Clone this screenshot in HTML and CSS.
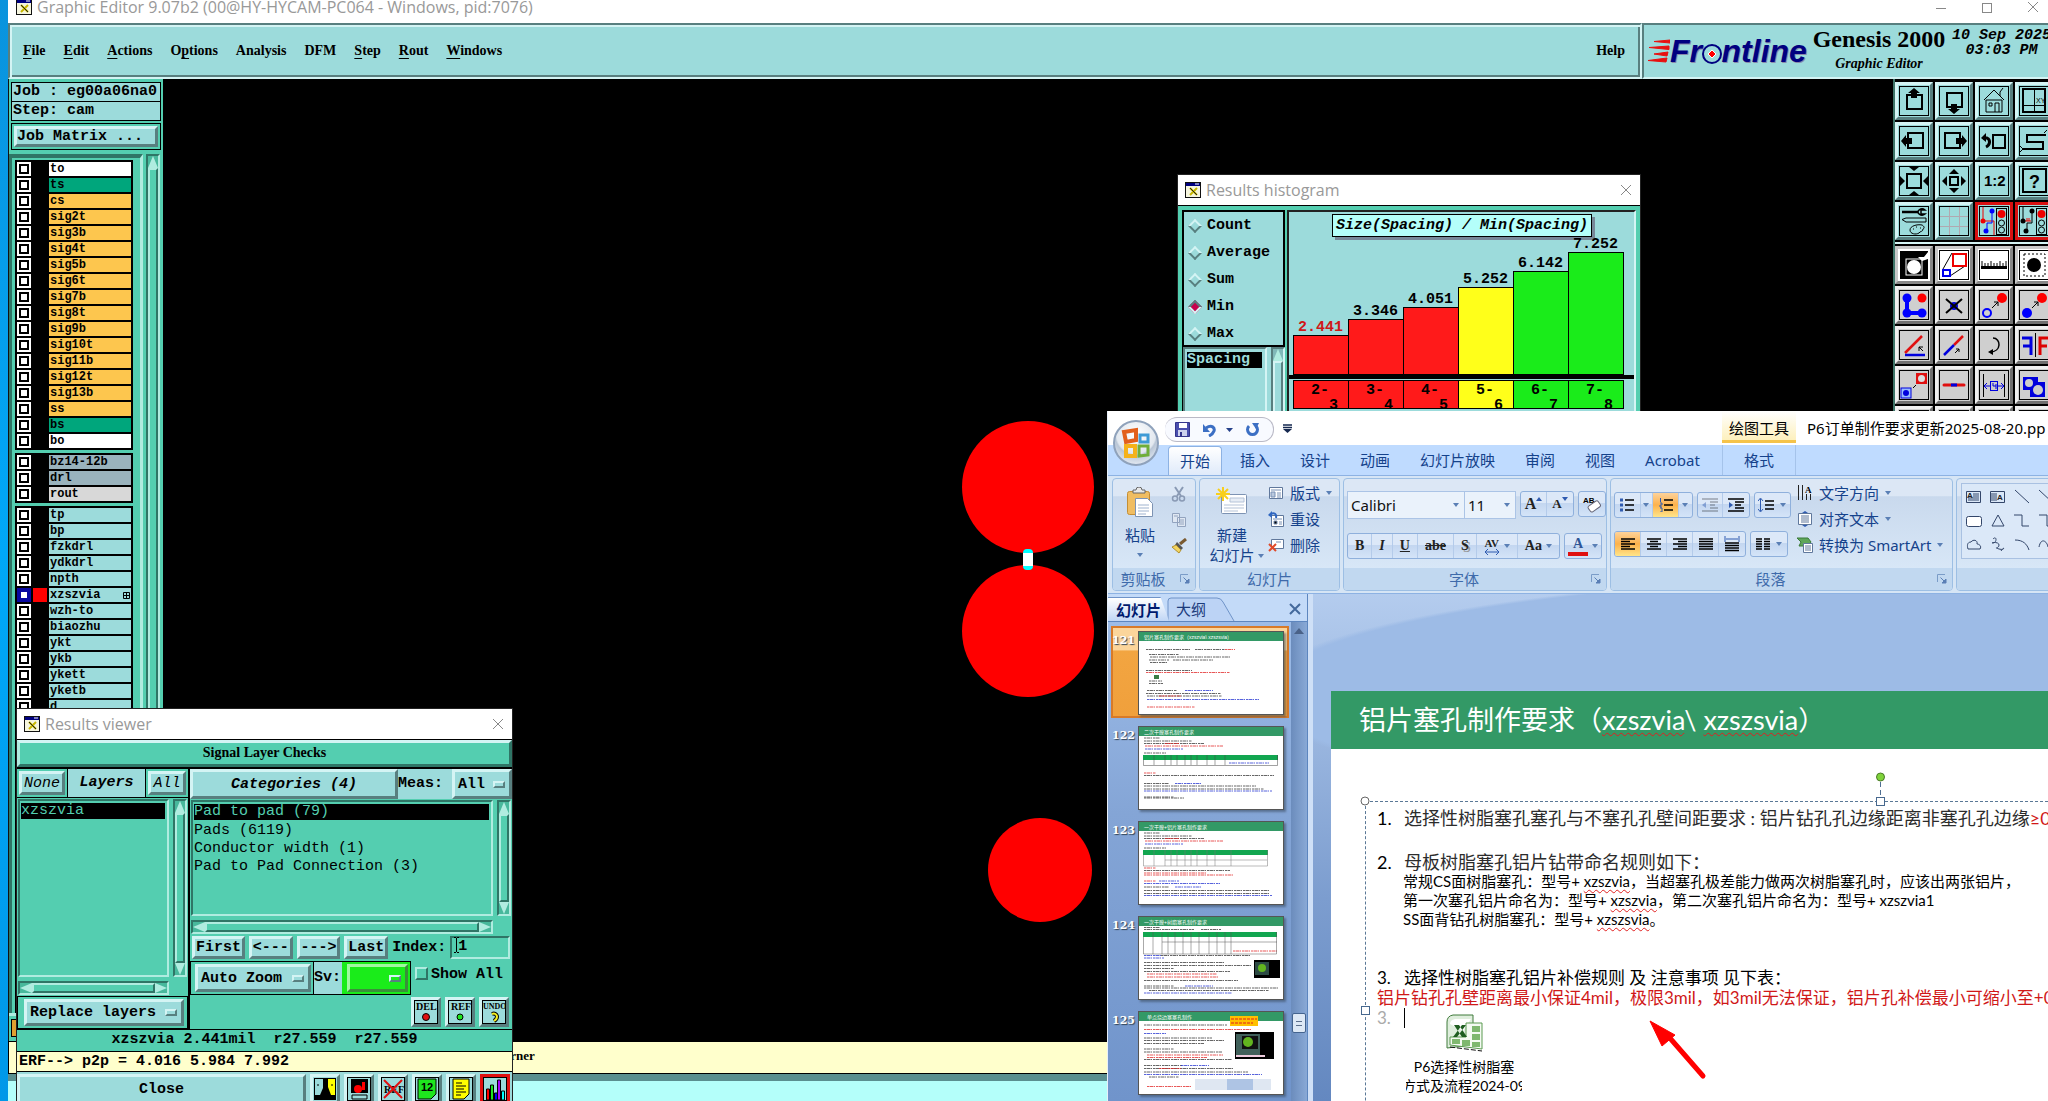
FILE: index.html
```html
<!DOCTYPE html>
<html lang="zh-CN">
<head>
<meta charset="utf-8">
<title>Graphic Editor</title>
<link rel="stylesheet" href="styles.css">
</head>
<body>
<svg class="defs" width="0" height="0" aria-hidden="true">
  <symbol id="appicon" viewBox="0 0 16 16"><rect x=".5" y=".5" width="15" height="15" fill="#f6f6e0" stroke="#111"/><rect x="1" y="1" width="14" height="3" fill="#000080"/><path d="M10 2h4" stroke="#fff"/><path d="M5 6l7 7M12 6l-7 7" stroke="#c8b800" stroke-width="2"/><path d="M5 6l7 7" stroke="#222"/></symbol>
  <symbol id="close" viewBox="0 0 12 12"><path d="M1 1l10 10M11 1L1 11" stroke="#888" stroke-width="1" fill="none"/></symbol>
  <symbol id="dd" viewBox="0 0 6 4"><path d="M0 0h6L3 4z" fill="#5a7fb5"/></symbol>
  <symbol id="launch" viewBox="0 0 10 10"><path d="M.5 8V.5H8" stroke="#7a9cc8" fill="none"/><path d="M3.500 3.500l4 4M9 5v4H5z" stroke="#5a7fb5" fill="#5a7fb5"/></symbol>
  <symbol id="lines" viewBox="0 0 14 12"><path d="M0 1h14M0 3.500h9M0 6h14M0 8.500h9M0 11h14" stroke="#000" stroke-width="1.400"/></symbol>
</svg>

<main class="editor">
  <header class="titlebar main-title">
    <svg class="appicon"><use href="#appicon"/></svg>
    <h1>Graphic Editor 9.07b2 (00@HY-HYCAM-PC064 - Windows, pid:7076)</h1>
    <div class="win-btns">
      <button aria-label="Minimize"><svg width="12" height="12"><path d="M1 7.500h10" stroke="#888"/></svg></button>
      <button aria-label="Maximize"><svg width="12" height="12"><rect x="1.500" y="2.500" width="9" height="9" fill="none" stroke="#888"/></svg></button>
      <button aria-label="Close"><svg width="12" height="12"><use href="#close"/></svg></button>
    </div>
  </header>

  <div class="menurow">
    <nav class="menubar">
      <button><u>F</u>ile</button><button><u>E</u>dit</button><button><u>A</u>ctions</button><button>O<u>p</u>tions</button><button>Analysis</button><button>DFM</button><button><u>S</u>tep</button><button><u>R</u>out</button><button><u>W</u>indows</button><button class="help">Help</button>
    </nav>
    <div class="brand">
      <div class="logo">
        <svg class="speed" width="22" height="26" viewBox="0 0 22 26"><path d="M22 2L6 3.500 22 5zM21 8L1 9.500 21 11.500zM20 14L6 16 19 18zM19 20L0 22.500 18 24z" fill="#e81010" stroke="#e81010"/></svg>
        <span class="logotext">Fr<span class="logo-o">o<svg width="22" height="22" viewBox="0 0 22 22"><circle cx="11" cy="11" r="9" fill="#9cdbdb" stroke="#000080" stroke-width="2"/><path d="M11 7l4 4-4 4-4-4z" fill="#f00" stroke="#fff"/></svg></span>ntline</span>
      </div>
      <div class="product"><strong>Genesis 2000</strong><em>Graphic Editor</em></div>
      <div class="clock"><span>10 Sep 2025</span><span>03:03 PM</span></div>
    </div>
  </div>

  <div class="work">
    <aside class="side">
      <div class="jobinfo">Job : eg00a06na0</div>
      <div class="jobinfo">Step: cam</div>
      <div class="matrixbox"><button class="bev">Job Matrix ...</button></div>
      <div class="layerpane">
        <div class="layerlist">
          <div class="sect">
            <label class="ly w"><input type="checkbox"><i></i><span>to</span></label>
            <label class="ly g"><input type="checkbox"><i></i><span>ts</span></label>
            <label class="ly o"><input type="checkbox"><i></i><span>cs</span></label>
            <label class="ly o"><input type="checkbox"><i></i><span>sig2t</span></label>
            <label class="ly o"><input type="checkbox"><i></i><span>sig3b</span></label>
            <label class="ly o"><input type="checkbox"><i></i><span>sig4t</span></label>
            <label class="ly o"><input type="checkbox"><i></i><span>sig5b</span></label>
            <label class="ly o"><input type="checkbox"><i></i><span>sig6t</span></label>
            <label class="ly o"><input type="checkbox"><i></i><span>sig7b</span></label>
            <label class="ly o"><input type="checkbox"><i></i><span>sig8t</span></label>
            <label class="ly o"><input type="checkbox"><i></i><span>sig9b</span></label>
            <label class="ly o"><input type="checkbox"><i></i><span>sig10t</span></label>
            <label class="ly o"><input type="checkbox"><i></i><span>sig11b</span></label>
            <label class="ly o"><input type="checkbox"><i></i><span>sig12t</span></label>
            <label class="ly o"><input type="checkbox"><i></i><span>sig13b</span></label>
            <label class="ly o"><input type="checkbox"><i></i><span>ss</span></label>
            <label class="ly g"><input type="checkbox"><i></i><span>bs</span></label>
            <label class="ly w"><input type="checkbox"><i></i><span>bo</span></label>
          </div>
          <div class="sect">
            <label class="ly s"><input type="checkbox"><i></i><span>bz14-12b</span></label>
            <label class="ly s"><input type="checkbox"><i></i><span>drl</span></label>
            <label class="ly r"><input type="checkbox"><i></i><span>rout</span></label>
          </div>
          <div class="sect grow">
            <label class="ly"><input type="checkbox"><i></i><span>tp</span></label>
            <label class="ly"><input type="checkbox"><i></i><span>bp</span></label>
            <label class="ly"><input type="checkbox"><i></i><span>fzkdrl</span></label>
            <label class="ly"><input type="checkbox"><i></i><span>ydkdrl</span></label>
            <label class="ly"><input type="checkbox"><i></i><span>npth</span></label>
            <label class="ly"><input type="checkbox" checked><i class="red"></i><span>xzszvia<svg width="7" height="7"><path d="M.5.500h6v6h-6zM3.500 0v7M0 3.500h7" fill="none" stroke="#000"/></svg></span></label>
            <label class="ly"><input type="checkbox"><i></i><span>wzh-to</span></label>
            <label class="ly"><input type="checkbox"><i></i><span>biaozhu</span></label>
            <label class="ly"><input type="checkbox"><i></i><span>ykt</span></label>
            <label class="ly"><input type="checkbox"><i></i><span>ykb</span></label>
            <label class="ly"><input type="checkbox"><i></i><span>ykett</span></label>
            <label class="ly"><input type="checkbox"><i></i><span>yketb</span></label>
            <label class="ly"><input type="checkbox"><i></i><span>d</span></label>
          </div>
        </div>
        <div class="vs"><b class="up"></b><b class="bar"></b></div>
      </div>
      <div class="sidefoot"><i></i></div>
    </aside>

    <section class="canvas" aria-label="Board view">
      <svg width="100%" height="100%">
        <g fill="#f00"><circle cx="865" cy="408" r="66"/><circle cx="865" cy="552" r="66"/><circle cx="877" cy="791" r="52"/></g>
        <rect x="860" y="470" width="10" height="21" rx="4" fill="#0ff"/><rect x="860" y="474" width="10" height="13" fill="#fff"/>
      </svg>
    </section>

    <aside class="tools">
      <div class="toolgrid">
        <button aria-label="Pan up"><svg viewBox="0 0 32 32"><rect class="fr" x="1.500" y="1.500" width="29" height="29"/><rect x="9" y="10" width="15" height="14" class="k2"/><path d="M16 3l6 5h-3v5h-6V8h-3z"/></svg></button>
        <button aria-label="Pan down"><svg viewBox="0 0 32 32"><rect class="fr" x="1.500" y="1.500" width="29" height="29"/><rect x="9" y="8" width="15" height="14" class="k2"/><path d="M16 29l6-5h-3v-5h-6v5h-3z"/></svg></button>
        <button aria-label="Home"><svg viewBox="0 0 32 32"><rect class="fr" x="1.500" y="1.500" width="29" height="29"/><path class="k1" d="M6 15l10-10 10 10M22 11V7l3-4M8 15v12h16V15M11 18h3v3h-3zM17 27v-9h4v9M8 15h16"/></svg></button>
        <button aria-label="Coordinates"><svg viewBox="0 0 32 32"><rect class="fr" x="1.500" y="1.500" width="29" height="29"/><rect class="k2" x="5" y="4" width="22" height="23"/><path class="k1" d="M16.500 4v23M5 20.500h22"/><text x="18" y="18" font-size="7">XY</text></svg></button>
        <button aria-label="Pan left"><svg viewBox="0 0 32 32"><rect class="fr" x="1.500" y="1.500" width="29" height="29"/><rect x="10" y="8" width="15" height="15" class="k2"/><path d="M3 16l5-6v3h6v6H8v3z"/></svg></button>
        <button aria-label="Pan right"><svg viewBox="0 0 32 32"><rect class="fr" x="1.500" y="1.500" width="29" height="29"/><rect x="7" y="8" width="15" height="15" class="k2"/><path d="M29 16l-5-6v3h-6v6h6v3z"/></svg></button>
        <button aria-label="Previous view"><svg viewBox="0 0 32 32"><rect class="fr" x="1.500" y="1.500" width="29" height="29"/><rect x="15" y="10" width="12" height="13" class="k2"/><path d="M5 13h4c4 2 3 7-1 9" fill="none" stroke="#000" stroke-width="3"/><path d="M3 13l5-5v9z"/></svg></button>
        <button aria-label="Serpentine"><svg viewBox="0 0 32 32"><rect class="fr" x="1.500" y="1.500" width="29" height="29"/><path class="k2" d="M28 10H9v7h16v7H5"/><path class="k1" d="M26 8l3-3M2 27l3-3M2 21l3 3"/></svg></button>
        <button aria-label="Zoom in"><svg viewBox="0 0 32 32"><rect class="fr" x="1.500" y="1.500" width="29" height="29"/><rect x="9" y="9" width="14" height="14" class="k2"/><path d="M11 2h10l-5 4zM11 30h10l-5-4zM2 11v10l5-5zM30 11v10l-5-5z"/></svg></button>
        <button aria-label="Zoom out"><svg viewBox="0 0 32 32"><rect class="fr" x="1.500" y="1.500" width="29" height="29"/><rect x="12" y="12" width="8" height="8" class="k2"/><path d="M11 9h10l-5-5zM11 23h10l-5 5zM9 11v10l-5-5zM23 11v10l5-5z"/></svg></button>
        <button aria-label="Scale"><svg viewBox="0 0 32 32"><rect class="fr" x="1.500" y="1.500" width="29" height="29"/><text x="6" y="21" font-size="15" font-weight="bold">1:2</text></svg></button>
        <button aria-label="Query"><svg viewBox="0 0 32 32"><rect class="fr" x="1.500" y="1.500" width="29" height="29"/><rect class="k2" x="5" y="4" width="23" height="23"/><text x="11" y="23" font-size="18" font-weight="bold">?</text></svg></button>
        <button aria-label="Setup"><svg viewBox="0 0 32 32"><rect class="fr" x="1.500" y="1.500" width="29" height="29"/><path d="M4 7h16" stroke="#000" stroke-width="2.500"/><path d="M27 5a4 3 0 1 0 0 4h-4V5z" fill="none" stroke="#000" stroke-width="1.500"/><path class="k1" d="M4 14.500l4-1.500h20v4H8z"/><path class="k1" d="M24 20c-5-1-12 1-12 5s6 5 9 3c1-2 4-1 4-4 2-1 1-3-1-4zM15 24h1M18 22h1M22 23h1"/></svg></button>
        <button aria-label="Grid"><svg viewBox="0 0 32 32"><rect class="fr" x="1.500" y="1.500" width="29" height="29"/><path d="M11.500 2v28M21.500 2v28M2 11.500h28M2 21.500h28" stroke="#b0a8b0"/></svg></button>
        <button class="on" aria-label="Net check"><svg viewBox="0 0 32 32"><rect class="fr" x="1.500" y="1.500" width="29" height="29"/><path d="M5 2v14h11v14" fill="none" stroke="#e00"/><path d="M14 6v12h-5v8" fill="none" stroke="#00f"/><circle cx="5" cy="16" r="2.500" fill="#e00"/><circle cx="14" cy="6" r="2.500" fill="#00f"/><circle cx="8" cy="26" r="2.500" fill="#00f"/><rect class="k1" x="18.500" y="3.500" width="10" height="26"/><circle cx="23.500" cy="9" r="4" fill="#e00"/><circle class="k1" cx="23.500" cy="18" r="3"/><circle class="k1" cx="23.500" cy="25" r="3"/></svg></button>
        <button class="on" aria-label="Spacing check"><svg viewBox="0 0 32 32"><rect class="fr" x="1.500" y="1.500" width="29" height="29"/><path class="k1" d="M5 2v14M14 6v12h-5v8"/><path d="M7 16h6M9 13v3M11 13v3" stroke="#e00"/><circle cx="5" cy="16" r="2.500"/><circle cx="14" cy="6" r="2.500"/><circle cx="8" cy="26" r="2.500"/><rect class="k1" x="18.500" y="3.500" width="10" height="26"/><circle cx="23.500" cy="9" r="4" fill="#e00"/><circle class="k1" cx="23.500" cy="18" r="3"/><circle class="k1" cx="23.500" cy="25" r="3"/></svg></button>
      </div>
      <div class="toolgrid gray">
        <button class="white" aria-label="Select"><svg viewBox="0 0 32 32"><rect x="2" y="2" width="28" height="28"/><rect x="8" y="10" width="16" height="16" fill="none" stroke="#fff"/><circle cx="16" cy="18" r="7" fill="#fff"/><path d="M20 8h6l4-5v7l-6 2z" fill="#fff"/></svg></button>
        <button class="white" aria-label="Resize area"><svg viewBox="0 0 32 32"><rect class="fr" x="1.500" y="1.500" width="29" height="29"/><path class="k1" d="M5 20L14 4M12 27l15-10"/><rect x="15" y="5" width="13" height="12" fill="#fff" stroke="#e00" stroke-width="2"/><rect x="5" y="21" width="7" height="6" fill="#fff" stroke="#00e" stroke-width="2"/></svg></button>
        <button class="white" aria-label="Measure"><svg viewBox="0 0 32 32"><rect class="fr" x="1.500" y="1.500" width="29" height="29"/><path d="M3 17h26v3H3z"/><path d="M4 12v6M7 14v4M10 14v4M13 12v6M16 14v4M19 14v4M22 12v6M25 14v4M28 12v6" stroke="#000"/></svg></button>
        <button class="white" aria-label="Pad"><svg viewBox="0 0 32 32"><rect class="fr" x="1.500" y="1.500" width="29" height="29"/><rect x="6" y="5" width="21" height="22" fill="none" stroke="#000" stroke-dasharray="2 2"/><circle cx="16" cy="16" r="7"/></svg></button>
        <button aria-label="Connect"><svg viewBox="0 0 32 32"><rect class="fr" x="1.500" y="1.500" width="29" height="29"/><path d="M9 9v15h15" fill="none" stroke="#00f" stroke-width="4"/><circle cx="9" cy="9" r="4.500" fill="#00f"/><circle cx="9" cy="24" r="4.500" fill="#00f"/><circle cx="24" cy="24" r="4.500" fill="#00f"/><circle cx="24" cy="9" r="4.500" fill="#f00"/></svg></button>
        <button aria-label="Delete"><svg viewBox="0 0 32 32"><rect class="fr" x="1.500" y="1.500" width="29" height="29"/><circle cx="16" cy="17" r="4" fill="#00d"/><path class="k2" d="M8 10l16 14M24 10L8 24"/></svg></button>
        <button aria-label="Copy"><svg viewBox="0 0 32 32"><rect class="fr" x="1.500" y="1.500" width="29" height="29"/><circle cx="24" cy="9" r="5" fill="#f00"/><circle cx="9" cy="24" r="4" fill="none" stroke="#00f" stroke-width="2"/><path class="k1" d="M14 19l6-6M16 13h4v4"/></svg></button>
        <button aria-label="Move"><svg viewBox="0 0 32 32"><rect class="fr" x="1.500" y="1.500" width="29" height="29"/><circle cx="24" cy="9" r="5" fill="#f00"/><circle cx="9" cy="24" r="5" fill="#00f"/><path class="k1" d="M14 19l6-6M16 13h4v4"/></svg></button>
        <button aria-label="Angle"><svg viewBox="0 0 32 32"><rect class="fr" x="1.500" y="1.500" width="29" height="29"/><path d="M7 24L24 7" stroke="#e01010" stroke-width="2.500"/><path d="M7 26h20" stroke="#00d" stroke-width="2.500"/><path class="k1" d="M25 22l-4-4M21 22v-4h4"/></svg></button>
        <button aria-label="Stretch line"><svg viewBox="0 0 32 32"><rect class="fr" x="1.500" y="1.500" width="29" height="29"/><path d="M16 16l9-9" stroke="#e01010" stroke-width="2.500"/><path d="M6 26l10-10" stroke="#00d" stroke-width="2.500"/><path class="k1" d="M17 24l4-4M18 20h3v3"/></svg></button>
        <button aria-label="Rotate"><svg viewBox="0 0 32 32"><rect class="fr" x="1.500" y="1.500" width="29" height="29"/><path d="M15 9c8 0 9 14-3 14" fill="none" stroke="#000" stroke-width="1.500"/><path d="M10 23l5-3v6z"/></svg></button>
        <button aria-label="Mirror"><svg viewBox="0 0 32 32"><rect class="fr" x="1.500" y="1.500" width="29" height="29"/><path class="k1" d="M17.500 4v24"/><path d="M4 9h9v17M5 17h8" fill="none" stroke="#00d" stroke-width="3"/><path d="M30 9h-8v17M29 17h-7" fill="none" stroke="#d00" stroke-width="3"/></svg></button>
        <button aria-label="Change symbol"><svg viewBox="0 0 32 32"><rect class="fr" x="1.500" y="1.500" width="29" height="29"/><rect x="3" y="19" width="10" height="10" fill="#9bf" stroke="#00d"/><circle cx="8" cy="24" r="3" fill="#00d"/><rect x="18" y="4" width="11" height="11" fill="#e01010"/><circle cx="23.500" cy="9.500" r="3.500" fill="#ddd"/><path class="k1" d="M15 19l3-3"/></svg></button>
        <button aria-label="Split line"><svg viewBox="0 0 32 32"><rect class="fr" x="1.500" y="1.500" width="29" height="29"/><path d="M6 16h20" stroke="#e01010" stroke-width="3" stroke-linecap="round"/><path d="M13 16h6" stroke="#00d" stroke-width="3"/></svg></button>
        <button aria-label="Spacing"><svg viewBox="0 0 32 32"><rect class="fr" x="1.500" y="1.500" width="29" height="29"/><path class="k1" d="M5.500 5v23M26.500 5v23"/><path d="M6 17h20M9 14l-3 3 3 3M23 14l3 3-3 3" stroke="#00d" fill="none"/><rect x="12.500" y="12.500" width="7" height="9" fill="#ccc" stroke="#00d"/><path d="M15 14v3h3M18 15v5" stroke="#00d" fill="none"/></svg></button>
        <button aria-label="Merge"><svg viewBox="0 0 32 32"><rect class="fr" x="1.500" y="1.500" width="29" height="29"/><path d="M5 8h15v5h7v15H12v-7H5z" fill="#00d"/><circle cx="11" cy="14" r="4" fill="#ccc"/><circle cx="20" cy="21" r="5" fill="#ccc"/></svg></button>
        <button aria-label="Tool 17"><svg viewBox="0 0 32 32"><rect class="fr" x="1.500" y="1.500" width="29" height="29"/></svg></button>
        <button aria-label="Tool 18"><svg viewBox="0 0 32 32"><rect class="fr" x="1.500" y="1.500" width="29" height="29"/></svg></button>
        <button aria-label="Tool 19"><svg viewBox="0 0 32 32"><rect class="fr" x="1.500" y="1.500" width="29" height="29"/></svg></button>
        <button aria-label="Tool 20"><svg viewBox="0 0 32 32"><rect class="fr" x="1.500" y="1.500" width="29" height="29"/></svg></button>
      </div>
    </aside>
  </div>
  <footer class="hint"><span>corner</span></footer>
  <div class="cmdline"></div>
</main>

<section class="hist" aria-label="Results histogram">
  <header class="titlebar"><svg class="appicon"><use href="#appicon"/></svg><h2>Results histogram</h2><button class="x" aria-label="Close"><svg width="12" height="12"><use href="#close"/></svg></button></header>
  <div class="hist-body">
    <div class="hist-left">
      <div class="radios">
        <label><input type="radio" name="agg">Count</label>
        <label><input type="radio" name="agg">Average</label>
        <label><input type="radio" name="agg">Sum</label>
        <label><input type="radio" name="agg" checked>Min</label>
        <label><input type="radio" name="agg">Max</label>
      </div>
      <div class="hist-list"><div class="box"><span>Spacing</span></div><div class="vs cy"><b class="up"></b><b class="bar"></b></div></div>
    </div>
    <div class="chart">
      <h3>Size(Spacing) / Min(Spacing)</h3>
      <div class="bars">
        <div class="red low"><span>2.441</span><i style="height:40px"></i></div>
        <div class="red"><span>3.346</span><i style="height:56px"></i></div>
        <div class="red"><span>4.051</span><i style="height:68px"></i></div>
        <div class="yel"><span>5.252</span><i style="height:88px"></i></div>
        <div class="grn"><span>6.142</span><i style="height:104px"></i></div>
        <div class="grn"><span>7.252</span><i style="height:123px"></i></div>
      </div>
      <div class="ticks"><span class="red">2-<br>&nbsp; 3</span><span class="red">3-<br>&nbsp; 4</span><span class="red">4-<br>&nbsp; 5</span><span class="yel">5-<br>&nbsp; 6</span><span class="grn">6-<br>&nbsp; 7</span><span class="grn">7-<br>&nbsp; 8</span></div>
    </div>
  </div>
</section>

<section class="viewer" aria-label="Results viewer">
  <header class="titlebar"><svg class="appicon"><use href="#appicon"/></svg><h2>Results viewer</h2><button class="x" aria-label="Close"><svg width="12" height="12"><use href="#close"/></svg></button></header>
  <h3 class="vtitle">Signal Layer Checks</h3>
  <div class="vcols">
    <div class="vleft">
      <div class="lhead"><button class="bev it">None</button><strong>Layers</strong><button class="bev it">All</button></div>
      <div class="lists">
        <ul class="list"><li class="sel">xzszvia</li></ul>
        <div class="vs"><b class="up"></b><b class="bar"></b><b class="down"></b></div>
        <div class="hs"><b class="lt"></b><b class="bar"></b><b class="rt"></b></div>
      </div>
      <div class="replace"><button class="bev opt">Replace layers<i></i></button></div>
    </div>
    <div class="vright">
      <div class="rhead"><button class="bev it b">Categories (4)</button><span class="meas">Meas:</span><button class="bev opt">All<i></i></button></div>
      <div class="lists">
        <ul class="list"><li class="sel">Pad to pad (79)</li><li>Pads (6119)</li><li>Conductor width (1)</li><li>Pad to Pad Connection (3)</li></ul>
        <div class="vs"><b class="up"></b><b class="bar"></b><b class="down"></b></div>
        <div class="hs"><b class="lt"></b><b class="bar"></b><b class="rt"></b></div>
      </div>
      <div class="navrow"><button class="bev">First</button><button class="bev">&lt;---</button><button class="bev">---&gt;</button><button class="bev">Last</button><label for="idx">Index:</label><span class="idx"><input id="idx" type="text" value="1"><svg width="7" height="16"><path d="M1 .5h2M4 .5h2M3.500 1v14M1 15.500h2M4 15.500h2" stroke="#000" fill="none"/></svg></span></div>
      <div class="zoomrow"><div class="az"><button class="bev opt">Auto Zoom<i></i></button></div><span class="sv">Sv:</span><div class="svbox"><button class="bev opt" aria-label="Severity"><i></i></button></div><label class="showall"><input type="checkbox">Show All</label></div>
      <div class="delrow">
        <button class="bev" aria-label="Delete"><svg viewBox="0 0 24 24"><rect class="fr" x=".5" y=".5" width="23" height="23"/><text class="cap" x="2" y="10" font-size="10">DEL</text><circle cx="12" cy="17" r="3.500" fill="#e01010" stroke="#000"/></svg></button>
        <button class="bev" aria-label="Reference"><svg viewBox="0 0 24 24"><rect class="fr" x=".5" y=".5" width="23" height="23"/><text class="cap" x="3" y="10" font-size="10">REF</text><circle cx="12" cy="17" r="3" fill="#1ee61e" stroke="#000"/></svg></button>
        <button class="bev" aria-label="Undo"><svg viewBox="0 0 24 24"><rect class="fr" x=".5" y=".5" width="23" height="23"/><text class="cap" x="1" y="9" font-size="8">UNDO</text><path d="M10 14c5-2 7 4 2 7" stroke="#000" stroke-width="4" fill="none"/><path d="M10 14c5-2 7 4 2 7" stroke="#f5ee20" stroke-width="2" fill="none"/></svg></button>
      </div>
    </div>
  </div>
  <pre class="vinfo">xzszvia 2.441mil  r27.559  r27.559</pre>
  <div class="erf">ERF--&gt; p2p = 4.016 5.984 7.992</div>
  <div class="vfoot">
    <button class="bev close">Close</button>
    <button class="bev" aria-label="Profile"><svg viewBox="0 0 24 24"><rect x="1" y="1" width="22" height="22"/><path d="M2 2h8v9l-3 7H2z" fill="#9cdbdb"/><path d="M15 2h7v16h-4l-3-8z" fill="#ff0"/><path d="M5 7v2M19 7v2" stroke="#000"/></svg></button>
    <button class="bev" aria-label="Snapshot"><svg viewBox="0 0 24 24"><rect class="fr" x=".5" y=".5" width="23" height="23"/><path d="M4 2h17v14H4z"/><circle cx="11" cy="12" r="4" fill="#f00"/><path d="M15 5h3v8h-3z" fill="#f00"/><path d="M5 18h15v4H5z" class="k1"/></svg></button>
    <button class="bev" aria-label="Clear reference"><svg viewBox="0 0 24 24"><rect class="fr" x=".5" y=".5" width="23" height="23"/><text class="cap" x="3" y="16" font-size="10">REF</text><path d="M3 3l18 18M21 3L3 21" stroke="#e01010" stroke-width="2"/></svg></button>
    <button class="bev" aria-label="Numbering"><svg viewBox="0 0 24 24"><rect class="fr" x=".5" y=".5" width="23" height="23"/><path d="M3 2h18v15l-5 5H3z" fill="#1ee61e" stroke="#000"/><text x="6" y="14" font-size="11" font-weight="bold">12</text></svg></button>
    <button class="bev" aria-label="Report"><svg viewBox="0 0 24 24"><rect class="fr" x=".5" y=".5" width="23" height="23"/><path d="M4 2h16v15l-5 5H4z" fill="#ff0" stroke="#000"/><path class="k1" d="M7 6h6M7 9h10M7 12h8M7 15h10M7 18h5"/></svg></button>
    <button class="bev hot" aria-label="Histogram"><svg viewBox="0 0 24 24"><rect class="fr" x=".5" y=".5" width="23" height="23"/><g stroke="#000"><path d="M3.500 12h3v11h-3z" fill="#f00"/><path d="M7.500 8h3v15h-3z" fill="#1ee61e"/><path d="M11.500 16h3v7h-3z" fill="#00f"/><path d="M14.500 3h3v20h-3z" fill="#a0f"/><path d="M18.500 14h3v9h-3z" fill="#0ff"/></g></svg></button>
  </div>
</section>

<section class="ppt" aria-label="PowerPoint">
  <header class="phead">
    <button class="orb" aria-label="Office">
      <svg viewBox="0 0 48 48" width="48" height="48"><defs><radialGradient id="og" cx=".5" cy=".3" r=".8"><stop offset="0" stop-color="#fff"/><stop offset=".55" stop-color="#e2e8ef"/><stop offset=".6" stop-color="#b9c6d6"/><stop offset="1" stop-color="#f8fbff"/></radialGradient></defs><circle cx="24" cy="24" r="22" fill="url(#og)" stroke="#8fa2bb" stroke-width="2"/><g fill="none" stroke-width="4"><path d="M12 13l12-2v10l-10 2z" stroke="#e2601c"/><path d="M28 16h8v7h-8z" stroke="#3f9bd6" stroke-width="3"/><path d="M14 27h9v10h-9z" stroke="#f5b21a"/><path d="M27 27h9v9l-9 1z" stroke="#6fae3a" stroke-width="3"/></g></svg>
    </button>
    <div class="qat">
      <div class="qatbar">
        <button aria-label="Save"><svg width="15" height="15"><path d="M.5.500h14v14h-14z" fill="#4a4fae" stroke="#34358c"/><path d="M4 1h8v5H4z" fill="#fff"/><path d="M3 8h9v6H3z" fill="#cdd2ee"/><path d="M5 10h2v4H5z" fill="#34358c"/></svg></button>
        <button aria-label="Undo"><svg width="14" height="14"><path d="M3 5c6-4 9 0 8 3s-3 4-5 5" fill="none" stroke="#3c6fc4" stroke-width="3"/><path d="M0 1v8h7z" fill="#3c6fc4"/></svg><svg width="7" height="4"><path d="M0 0h7L3.500 4z" fill="#26418a"/></svg></button>
        <button aria-label="Redo"><svg width="13" height="14"><path d="M3 3a5 5 0 1 0 7 0" fill="none" stroke="#3c6fc4" stroke-width="3"/><path d="M6 0h7l-3 6z" fill="#3c6fc4"/></svg></button>
      </div>
      <button aria-label="Customize"><svg width="9" height="9"><path d="M0 1h9M0 3.500h9" stroke="#15284f" stroke-width="1.500"/><path d="M0 5h9L4.500 9z" fill="#15284f"/></svg></button>
    </div>
    <div class="ctxtitle">绘图工具</div>
    <div class="doctitle">P6订单制作要求更新2025-08-20.pp</div>
    <nav class="ptabs"><button class="act">开始</button><button>插入</button><button>设计</button><button>动画</button><button>幻灯片放映</button><button>审阅</button><button>视图</button><button>Acrobat</button></nav>
    <button class="ctxtab">格式</button>
  </header>

  <div class="ribbon">
    <div class="grp clip">
      <div class="gbody">
        <button class="big"><svg width="28" height="30"><rect x="1.500" y="4.500" width="22" height="23" rx="2" fill="#f0bd62" stroke="#c48e35"/><path d="M7 6V3h3a3 3 0 0 1 6 0h3v3z" fill="#e8e8e8" stroke="#666"/><path d="M9.500 11.500h12l5 5v13h-17z" fill="#fff" stroke="#7d93b3"/><path d="M12 18h11M12 21h11M12 24h11M12 27h8" stroke="#9fb3cf"/></svg><span>粘贴</span><svg class="dd"><use href="#dd"/></svg></button>
        <div class="col3">
          <button aria-label="剪切"><svg width="16" height="16"><path d="M4 1l6 9M12 1L6 10" stroke="#8a9ab4" stroke-width="2"/><circle cx="4" cy="12.500" r="2.500" fill="none" stroke="#8a9ab4" stroke-width="1.500"/><circle cx="11" cy="12.500" r="2.500" fill="none" stroke="#8a9ab4" stroke-width="1.500"/></svg></button>
          <button aria-label="复制"><svg width="16" height="16"><path d="M1.500 1.500h7v9h-7zM6.500 5.500h8v9h-8z" fill="#dfe7f2" stroke="#92a3be"/><path d="M8 8h5M8 10h5M8 12h5M3 4h4" stroke="#92a3be"/></svg></button>
          <button aria-label="格式刷"><svg width="16" height="16"><path d="M9 6l6-5" stroke="#7a5a30" stroke-width="3"/><path d="M6 4l6 6-2 2-6-5z" fill="#555"/><path d="M1 9l4-2 5 5-2 3z" fill="#f3d560" stroke="#b09030"/></svg></button>
        </div>
      </div>
      <div class="gtitle"><span>剪贴板</span><svg class="launch"><use href="#launch"/></svg></div>
    </div>
    <div class="grp slides">
      <div class="gbody">
        <button class="big"><svg width="32" height="30"><rect x="5.500" y="7.500" width="25" height="19" rx="1" fill="#fff" stroke="#7d93b3"/><path d="M14 11h14v4H14zM8 18h20M8 21h20M8 24h14" stroke="#b5c3d8" fill="#e7edf5"/><path d="M7 0v14M0 7h14M2 2l10 10M12 2L2 12" stroke="#f8cf1c" stroke-width="2"/></svg><span>新建<br>幻灯片</span><svg class="dd side-dd"><use href="#dd"/></svg></button>
        <div class="rows">
          <button><svg width="16" height="14"><path d="M1.500 1.500h13v11h-13z" fill="#fff" stroke="#60789c"/><path d="M3 4h10M3 6h4v5H3zM9 7h4M9 9h4M9 11h4" stroke="#7890b4" fill="#bac9de"/></svg>版式<svg class="dd"><use href="#dd"/></svg></button>
          <button><svg width="16" height="16"><path d="M3.500 4.500h12v11h-12z" fill="#fff" stroke="#60789c"/><path d="M5 8h9M6 10h3v3H6zM11 11h3M11 13h3" stroke="#7890b4"/><path d="M8 7c1-4-2-6-5-4" fill="none" stroke="#2f66c0" stroke-width="2"/><path d="M0 4l4-4v7z" fill="#2f66c0"/></svg>重设</button>
          <button><svg width="16" height="14"><path d="M3.500 1.500h12v9h-12z" fill="#fff" stroke="#60789c"/><path d="M8 4h5" stroke="#7890b4"/><path d="M1 6l7 7M8 6l-7 7" stroke="#e04a2a" stroke-width="2"/></svg>删除</button>
        </div>
      </div>
      <div class="gtitle"><span>幻灯片</span></div>
    </div>
    <div class="grp font">
      <div class="gbody v">
        <div class="frow">
          <button class="combo c1">Calibri<svg class="dd"><use href="#dd"/></svg></button><button class="combo c2">11<svg class="dd"><use href="#dd"/></svg></button>
          <div class="bg grow1"><button class="ser" aria-label="增大字号">A<svg width="6" height="4"><path d="M0 4h6L3 0z" fill="#2f5bb0"/></svg></button><button class="ser sm" aria-label="减小字号">A<svg width="6" height="4"><path d="M0 0h6L3 4z" fill="#2f5bb0"/></svg></button></div>
          <div class="bg"><button aria-label="清除格式"><svg width="20" height="18"><text x="1" y="8" font-size="8" font-weight="bold">AB</text><rect x="6" y="8" width="12" height="7" rx="2" fill="#fff" stroke="#667" transform="rotate(-35 12 11)"/></svg></button></div>
        </div>
        <div class="frow f2">
          <div class="bg fmt"><button class="ser">B</button><button class="ser i">I</button><button class="ser"><u>U</u></button><button class="ser"><s>abe</s></button><button class="ser sh">S</button><button class="ser av"><span>AV<svg width="16" height="6"><path d="M1 3h14M4 0L1 3l3 3M12 0l3 3-3 3" stroke="#2f5bb0" fill="none"/></svg></span><svg class="dd"><use href="#dd"/></svg></button><button class="ser">Aa<svg class="dd"><use href="#dd"/></svg></button></div>
          <div class="bg"><button class="ser color"><span>A</span><svg class="dd"><use href="#dd"/></svg></button></div>
        </div>
      </div>
      <div class="gtitle"><span>字体</span><svg class="launch"><use href="#launch"/></svg></div>
    </div>
    <div class="grp para">
      <div class="gbody">
        <div class="pcol">
          <div class="frow">
            <div class="bg"><button aria-label="项目符号"><svg width="14" height="14"><path d="M5 2h9M5 7h9M5 12h9" stroke="#000" stroke-width="1.500"/><path d="M0 2h3M0 7h3M0 12h3" stroke="#2f5bb0" stroke-width="3"/></svg></button><button class="n" aria-label="更多"><svg class="dd"><use href="#dd"/></svg></button><button class="hot" aria-label="编号"><svg width="14" height="14"><path d="M5 2h9M5 7h9M5 12h9" stroke="#000" stroke-width="1.500"/><path d="M1.500 0v4M1 5h2v2H1v2h2M1 10h2v4H1" stroke="#2f5bb0" fill="none"/></svg></button><button class="n" aria-label="更多"><svg class="dd"><use href="#dd"/></svg></button></div>
            <div class="bg"><button aria-label="减少缩进"><svg width="16" height="14" opacity=".45"><path d="M0 1h16M8 4h8M8 7h5M8 10h8M0 13h16" stroke="#000"/><path d="M0 7l4-3v6z" fill="#2f5bb0"/></svg></button><button aria-label="增加缩进"><svg width="16" height="14"><path d="M0 1h16M7 4h9M7 7h6M7 10h9M0 13h16" stroke="#000" stroke-width="1.500"/><path d="M5 7L1 4v6z" fill="#2f5bb0"/></svg></button></div>
            <div class="bg"><button class="w" aria-label="行距"><svg width="16" height="16"><path d="M7 4h9M7 8h9M7 12h9" stroke="#000" stroke-width="1.500"/><path d="M2.500 2v12M0 4l2.500-3L5 4M0 12l2.500 3L5 12" fill="none" stroke="#2f5bb0"/></svg><svg class="dd"><use href="#dd"/></svg></button></div>
          </div>
          <div class="frow f2">
            <div class="bg"><button class="hot" aria-label="左对齐"><svg width="14" height="12"><use href="#lines"/></svg></button><button aria-label="居中"><svg width="14" height="12"><path d="M0 1h14M3 3.500h8M0 6h14M3 8.500h8M0 11h14" stroke="#000" stroke-width="1.400"/></svg></button><button aria-label="右对齐"><svg width="14" height="12"><path d="M0 1h14M5 3.500h9M0 6h14M5 8.500h9M0 11h14" stroke="#000" stroke-width="1.400"/></svg></button><button aria-label="两端对齐"><svg width="14" height="12"><path d="M0 1h14M0 3.500h14M0 6h14M0 8.500h14M0 11h14" stroke="#000" stroke-width="1.400"/></svg></button><button aria-label="分散对齐"><svg width="16" height="16"><path d="M1 0v6M15 0v6M2 3h12" stroke="#2f5bb0"/><path d="M1 7h14M1 9.500h14M1 12h14M1 14.500h14" stroke="#000" stroke-width="1.400"/></svg></button></div>
            <div class="bg"><button class="w" aria-label="分栏"><svg width="14" height="12"><path d="M0 1h6M0 3.500h6M0 6h6M0 8.500h6M0 11h6M8 1h6M8 3.500h6M8 6h6M8 8.500h6M8 11h6" stroke="#000" stroke-width="1.400"/></svg><svg class="dd"><use href="#dd"/></svg></button></div>
          </div>
        </div>
        <div class="rows">
          <button><svg width="16" height="16"><path d="M1.500 0v15M5.500 0v15M9.500 9v6M13.500 9v6" stroke="#222"/><text class="cap" x="8" y="8" font-size="9" font-weight="bold">A</text></svg>文字方向<svg class="dd"><use href="#dd"/></svg></button>
          <button><svg width="16" height="16"><path d="M1.500 2.500h13v11h-13z" fill="#fff" stroke="#60789c"/><path d="M4 5h8M4 7h8M4 9h8M4 11h8" stroke="#60789c"/><path d="M5 2h6L8 0zM5 14h6l-3 2z" fill="#2f5bb0"/></svg>对齐文本<svg class="dd"><use href="#dd"/></svg></button>
          <button><svg width="16" height="16"><path d="M0 1h11l3 4-3 4H2l2-4z" fill="#5fa65a" stroke="#3b7a38"/><path d="M6.500 6.500h9v9h-9z" fill="#fff" stroke="#60789c"/><path d="M8 9h6M8 11h6M8 13h6" stroke="#60789c"/></svg>转换为 SmartArt<svg class="dd"><use href="#dd"/></svg></button>
        </div>
      </div>
      <div class="gtitle"><span>段落</span><svg class="launch"><use href="#launch"/></svg></div>
    </div>
    <div class="grp draw">
      <div class="gbody">
        <svg class="shapes" width="110" height="76" fill="none" stroke="#33466a"><rect x=".5" y=".5" width="109" height="75" stroke="#a9c1e2" fill="#dbe8f8"/><path d="M5.500 8.500h14v11h-14zM29.500 8.500h14v11h-14zM12 11h6M12 13h6M7 15h11M7 17h11M31 10v8M33 10v8M35 10v8M54 7l14 13M78 7l14 13"/><text x="6" y="15" font-size="8" fill="#222" stroke="none" font-weight="bold">A</text><text x="36" y="17" font-size="8" fill="#222" stroke="none" font-weight="bold">A</text><rect x="5.500" y="33.500" width="15" height="10" rx="2" fill="#fff"/><path d="M31 43l6-11 6 11zM53 32h8v11h7M78 32h8v11h7M7 66h12c2-3-1-5-3-5 1-4-4-5-6-2-4 0-4 4-3 7zM32 56c4-4 4 4 0 4s6-2 6 2-6 2 0 4 6-4 2 2M54 57c8 0 12 4 14 10M78 64c2-10 8-6 9 0"/></svg>
      </div>
      <div class="gtitle"></div>
    </div>
  </div>

  <div class="pmain">
    <aside class="pane">
      <div class="pantabs"><button class="act">幻灯片</button><button class="tab2"><svg width="68" height="24" viewBox="0 0 68 24"><path d="M1 24V4q0-3 3-3h46q4 0 6 4l11 19" fill="#bcd3f5" stroke="#6f93c8"/></svg><span>大纲</span></button><button class="px" aria-label="关闭"><svg width="12" height="12"><path d="M1 1l10 10M11 1L1 11" stroke="#44699c" stroke-width="2"/></svg></button></div>
      <div class="panbody">
        <ol class="thumbs">
          <li class="cur"><span>121</span><svg viewBox="0 0 144 82"><rect width="144" height="82" fill="#fff"/><rect width="144" height="9" fill="#339966"/><text x="5" y="7" font-size="5" fill="#fff">铝片塞孔制作要求（xzszvia\ xzszsvia）</text><g class="tx"><path d="M7 17.500h44M56 17.500h30M10 22.500h30M11 25h80M10 28h20M34 28h40M11 30.500h18M7 38.500h46M10 49h13M10 51.500h14M8 58.500h30M7 61.500h75M8 64h75"/></g><g class="tr"><path d="M86 17.500h10M7 40.500h84M20 64h22M8 75h48"/></g><g class="tb"><path d="M46 58.500h28M8 67.500h112"/></g><rect x="15" y="43" width="5" height="4" fill="#3a7d44"/></svg></li>
          <li><span>122</span><svg viewBox="0 0 144 82"><rect width="144" height="82" fill="#fff"/><rect width="144" height="9" fill="#339966"/><text x="5" y="7" font-size="5" fill="#fff">二次干膜塞孔制作要求</text><g class="tx"><path d="M5 11h16M5 14h48M5 16.500h60M5 26h22M5 48.500h130M5 56.500h25M5 59h112M5 62h120M5 70h30M5 71h40"/></g><g class="tr"><path d="M26 16.500h14M6 19h78M5 46h12"/></g><g class="tb"><path d="M6 22h38M36 56.500h26M5 64h128M90 36h40"/></g><rect x="4" y="28" width="135" height="5" fill="#12a650"/><path d="M4.500 33v5.500h134V28M15 28v10M26 28v10M32 28v10M38 28v10M46 28v10M52 28v10M58 28v10M68 28v10M76 28v10M86 28v10" fill="none" stroke="#444" stroke-width=".5"/></svg></li>
          <li><span>123</span><svg viewBox="0 0 144 82"><rect width="144" height="82" fill="#fff"/><rect width="144" height="9" fill="#339966"/><text x="5" y="7" font-size="5" fill="#fff">一次干膜+铝片塞孔制作要求</text><g class="tx"><path d="M5 11h16M5 14h48M5 16.500h60M5 26h22M5 48.500h86M5 65h25M5 68.500h125M5 71.500h125"/></g><g class="tr"><path d="M26 16.500h14M6 19h78M5 46h12M5 51h62M5 53h90M5 59h12"/></g><g class="tb"><path d="M6 22h38M20 59h20M5 61.500h76M36 65h26M5 73.500h128"/></g><rect x="4" y="28" width="125" height="5" fill="#12a650"/><path d="M4.500 33v11h124V28M15 28v16M26 28v16M32 28v16M38 28v16M46 28v16M52 28v16M58 28v16M68 28v16M76 28v16M92 28v16M26 38h102" fill="none" stroke="#777" stroke-width=".5"/></svg></li>
          <li><span>124</span><svg viewBox="0 0 144 82"><rect width="144" height="82" fill="#fff"/><rect width="144" height="9" fill="#339966"/><text x="5" y="7" font-size="5" fill="#fff">一次干膜+树脂塞孔制作要求</text><g class="tx"><path d="M5 10.500h16M5 12.500h50M62 12.500h20M22 38.500h90M5 45.500h80M5 48.500h108M5 51.500h30M5 54.500h86M5 63.500h94M5 69h30M5 71h134M10 73.500h120"/></g><g class="tr"><path d="M8 57h70M8 60h72M94 34h44"/></g><g class="tb"><path d="M5 38.500h17M5 41h20M46 69h28M5 76h88"/></g><rect x="4" y="15" width="134" height="5" fill="#12a650"/><path d="M4.500 20v17h133V15M14 15v22M23 15v22M29 15v22M36 15v22M44 15v22M52 15v22M60 15v22M70 15v22M78 15v22M86 15v22M92 15v22M23 25h115" fill="none" stroke="#555" stroke-width=".5"/><path d="M115 43h26v18h-26z"/><path d="M116 45h14v13h-14z" fill="#2c4a44"/><circle cx="123" cy="51" r="4" fill="#62b51f"/></svg></li>
          <li><span>125</span><svg viewBox="0 0 144 82"><rect width="144" height="82" fill="#fff"/><rect width="144" height="9" fill="#339966"/><text x="8" y="7" font-size="5" fill="#fff">单点烧边塞塞孔制作</text><rect x="91" y="4" width="28" height="10" fill="#ffc000"/><path d="M92 7h26M92 11h22" stroke="#e02020" stroke-dasharray="3 1"/><g class="tx"><path d="M5 13h83M5 26h68M5 28.500h80M5 31.500h60M5 37h30M5 40h78M5 47.500h88M5 53.500h38M5 56.500h90M5 60h104M10 65h30"/></g><g class="tr"><path d="M5 17.500h108M8 43h76M8 45.500h60M20 56.500h22M8 74.500h44"/></g><g class="tb"><path d="M5 21.500h22M42 53.500h28M5 62.500h118"/></g><path d="M96 20h39v27H96z"/><path d="M97 22h24v23H97z" fill="#40605a"/><path d="M103 24h16v13h-16z" fill="#111"/><circle cx="109" cy="30" r="5" fill="#62b51f"/><path d="M97 43h29v2H97z" fill="#ecd"/><path d="M56 67h76v11H56z" fill="#dfe7f2"/><path d="M88 67h26v11H88z" fill="#aec4e4"/></svg></li>
        </ol>
        <div class="pscroll"><svg width="10" height="6"><path d="M5 0l5 6H0z" fill="#4a6288"/></svg><i></i></div>
      </div>
    </aside>
    <div class="stage">
      <div class="slide">
        <h2>铝片塞孔制作要求（<u>xzszvia</u>\ <u>xzszsvia</u>）</h2>
        <div class="tbox">
          <svg class="h h1"><circle cx="5" cy="5" r="4" fill="#fff" stroke="#666"/></svg>
          <svg class="h h2"><path d="M5.500 11v18" stroke="#4f6f92" stroke-dasharray="5 3"/><circle cx="5.500" cy="6" r="4" fill="#7fd33a" stroke="#4a7a28"/><rect x="1.500" y="26.500" width="8" height="8" fill="#fff" stroke="#47688e"/></svg>
          <svg class="h h3"><rect x="1.500" y="1.500" width="8" height="8" fill="#fff" stroke="#47688e"/></svg>
          <p class="n l18"><b>1.</b><span>选择性树脂塞孔塞孔与不塞孔孔壁间距要求 : 铝片钻孔孔边缘距离非塞孔孔边缘<em>≥0</em></span></p>
          <p class="n l18 m24"><b>2.</b><span>母板树脂塞孔铝片钻带命名规则如下：</span></p>
          <p class="sub">常规CS面树脂塞孔：型号+ <u>xzszvia</u>，当超塞孔极差能力做两次树脂塞孔时，应该出两张铝片，</p>
          <p class="sub">第一次塞孔铝片命名为：型号+ <u>xzszvia</u>，第二次塞孔铝片命名为：型号+ xzszvia1</p>
          <p class="sub">SS面背钻孔树脂塞孔：型号+ <u>xzszsvia</u>。</p>
          <p class="n m40"><b>3.</b><span>选择性树脂塞孔铝片补偿规则 及 注意事项 见下表：</span></p>
          <p class="warn">铝片钻孔孔壁距离最小保证4mil，极限3mil，如3mil无法保证，铝片孔补偿最小可缩小至+0.1mm</p>
          <p class="n ghost"><b>3.</b><span class="caret"></span></p>
        </div>
        <figure class="attach"><svg width="40" height="38" viewBox="0 0 40 38"><path d="M3 8q0-6 6-7h20v30L3 34z" fill="#dfeedd" stroke="#3f7a3a"/><path d="M6 10q0-4 5-5h16l-8 12z" fill="#fff"/><path d="M22 9h16v26l-32-4v-8h16z" fill="#f4faf2" stroke="#5a9a50"/><path d="M28 12h8v6h-8zM28 20h8v6h-8zM28 28h8v5h-8zM18 26h8v6h-8zM8 25h8v5H8z" fill="#7fb86f"/><path d="M10 11h5l8 12h-5zM22 11h-4L9 23h4z" fill="#1f5e20"/><path d="M6 33l32 4" stroke="#111" stroke-dasharray="5 2"/></svg><figcaption><span>P6选择性树脂塞</span><span>方式及流程2024-09</span></figcaption></figure>
        <svg class="arrow" width="58" height="60"><path d="M54 56L20 17" stroke="#f00" stroke-width="5" stroke-linecap="round"/><path d="M1 1l25 14-13 11z" fill="#f00" stroke="#f00" stroke-linejoin="round"/></svg>
      </div>
    </div>
  </div>
</section>
</body>
</html>
```
FILE: styles.css
```css
:root {
  --mono: "Liberation Mono", "Noto Sans CJK SC", monospace;
  --ui: "Noto Sans", "Noto Sans CJK SC", sans-serif;
  --serif: "Liberation Serif", serif;
  --cy: #9cdbdb; --cyl: #d4f4f4; --cyd: #587f7f;
  --te: #54ceb0; --tel: #b0ece0; --ted: #2f7566;
}
* { box-sizing: border-box; }
html, body { height: 100%; }
body { margin: 0; overflow: hidden; position: relative; background: linear-gradient(#0a93dd, #00a8f8 50%, #0098e8); font-family: var(--mono); }
h1, h2, h3, p, ul, ol, pre, figure { margin: 0; padding: 0; font-weight: normal; }
ul, ol { list-style: none; }
button { font: inherit; color: inherit; border: 0; padding: 0; margin: 0; background: none; white-space: nowrap; }
svg { display: block; }
.defs { position: absolute; }
svg .fr { fill: none; stroke: #000; }
svg .k1 { fill: none; stroke: #000; }
svg .k2 { fill: none; stroke: #000; stroke-width: 2; }
svg text { font-family: "Liberation Sans", "Noto Sans CJK SC", sans-serif; }
svg text.cap { font-family: var(--serif); }

.editor { position: absolute; left: 8px; right: -8px; top: 0; bottom: 0; display: flex; flex-direction: column; background: #000; }
.titlebar { display: flex; align-items: center; background: #fff; font-family: "Open Sans", sans-serif; color: #999; height: 30px; flex: none; padding: 0 8px 0 7px; gap: 5px; }
.titlebar h1, .titlebar h2 { font-size: 16px; line-height: 24px; flex: 1; white-space: nowrap; }
.titlebar .appicon { width: 16px; height: 16px; flex: none; }
.main-title { height: 23px; padding-bottom: 9px; padding-left: 8px; }
.win-btns { display: flex; gap: 34px; padding-right: 9px; }

.menurow { display: flex; height: 56px; flex: none; background: var(--cy); color: #000; }
.menubar { flex: 1; display: flex; align-items: center; gap: 18px; padding: 0 15px 0 13px; border: 2px solid; border-color: var(--cyd) var(--cyl) var(--cyl) var(--cyd); box-shadow: inset 2px 2px var(--cyl), inset -2px -2px var(--cyd); font: bold 14px/20px var(--serif); }
.menubar u { text-underline-offset: 3px; }
.menubar .help { margin-left: auto; }
.brand { flex: none; width: 414px; display: flex; border: 2px solid; border-color: var(--cyd) var(--cyd) var(--cyl) var(--cyd); padding-left: 4px; }
.logo { display: flex; align-items: center; width: 161px; }
.speed { flex: none; }
.logotext { font: italic bold 32px/50px "Liberation Sans", sans-serif; color: #000080; text-shadow: 1px 1px #88a; }
.logo-o { position: relative; }
.logo-o svg { position: absolute; left: -1px; top: 10px; }
.product { width: 140px; text-align: center; display: flex; flex-direction: column; }
.product strong { font: bold 24px/28px var(--serif); white-space: nowrap; }
.product em { font: italic bold 14px/22px var(--serif); }
.clock { display: flex; flex-direction: column; align-items: center; font: italic bold 15px/15px var(--mono); padding: 3px 0 0 3px; white-space: nowrap; }

.work { flex: 1; display: flex; min-height: 0; }
.side { width: 155px; flex: none; background: var(--te); border-left: 1px solid #111; padding: 3px 2px 0; display: flex; flex-direction: column; font-weight: bold; }
.jobinfo { border: 1px solid #000; background: var(--cy); height: 20px; margin-bottom: -1px; font-size: 15px; line-height: 18px; padding-left: 1px; white-space: nowrap; }
.matrixbox { border: 1px solid #000; height: 27px; padding: 2px; margin-top: 3px; }
.matrixbox .bev { width: 100%; height: 100%; text-align: left; padding-left: 0; line-height: 16px; font-size: 15px; }
.bev { background: var(--cy); border: 3px solid; border-color: var(--cyl) var(--cyd) var(--cyd) var(--cyl); }
.layerpane { flex: 1; display: flex; gap: 3px; margin-top: 4px; min-height: 0; }
.layerlist { width: 134px; border-top: 4px solid var(--ted); border-left: 3px solid var(--ted); border-right: 3px solid var(--tel); display: flex; flex-direction: column; gap: 3px; overflow: hidden; margin-left: -2px; padding: 2px 7px 0 3px; }
.sect { background: #000; padding: 2px 2px 0; flex: none; }
.sect.grow { flex: 1; }
.ly { display: flex; gap: 2px; height: 14px; margin-bottom: 2px; }
.ly input { appearance: none; margin: 0; width: 14px; height: 14px; background: #fff; border: 2px solid #fff; box-shadow: inset 0 0 0 2px #000; flex: none; }
.ly input:checked { border-color: #0808a0; box-shadow: inset 0 0 0 2px #0808a0; }
.ly i { width: 14px; flex: none; }
.ly i.red { background: #f00; }
.ly span { flex: 1; background: var(--cy); font-size: 12px; line-height: 13px; padding-left: 1px; display: flex; align-items: center; justify-content: space-between; padding-right: 1px; }
.w span { background: #fff; } .g span { background: #00a67c; } .o span { background: #fdc64e; } .s span { background: #9ab3bd; } .r span { background: #d8d8d8; }
.sidefoot { height: 28px; flex: none; margin: 0 -2px; border-top: 3px solid var(--tel); padding: 3px 2px; }
.sidefoot i { display: block; width: 20px; height: 18px; background: #e0a030; border: 1px solid #000; }

.vs, .hs { display: flex; border: 2px solid; border-color: var(--ted) var(--tel) var(--tel) var(--ted); background: #48b89c; }
.vs { flex-direction: column; width: 14px; }
.hs { height: 14px; }
.vs .bar, .hs .bar { flex: 1; background: var(--te); border: 2px solid; border-color: var(--tel) var(--ted) var(--ted) var(--tel); }
.vs .up, .vs .down { height: 12px; background: var(--tel); clip-path: polygon(50% 0, 100% 100%, 0 100%); }
.vs .down { clip-path: polygon(0 0, 100% 0, 50% 100%); }
.hs .lt, .hs .rt { width: 12px; background: var(--tel); clip-path: polygon(0 50%, 100% 0, 100% 100%); }
.hs .rt { clip-path: polygon(0 0, 100% 50%, 0 100%); }
.vs.cy { border-color: var(--cyd) var(--cyl) var(--cyl) var(--cyd); background: #80b8b8; }
.vs.cy .bar { background: var(--cy); border-color: var(--cyl) var(--cyd) var(--cyd) var(--cyl); }

.canvas { flex: 1; min-width: 0; background: #000; }
.tools { flex: none; width: 163px; background: #000; border-left: 2px solid #3e7468; padding-top: 3px; overflow: hidden; }
.toolgrid { display: grid; grid-template-columns: repeat(4, 38px); gap: 2px; padding-bottom: 2px; }
.toolgrid button { height: 38px; background: var(--cy); border: 3px solid; border-color: var(--cyl) var(--cyd) var(--cyd) var(--cyl); }
.toolgrid button.on { border-color: #d81010; }
.gray { border-top: 2px solid var(--cyl); padding-top: 2px; }
.gray button { background: #cfcfcf; border-color: #f0f0f0 #707070 #707070 #f0f0f0; }
.gray button.white { background: #fff; border-color: #c8c8c8 #888 #888 #c8c8c8; }

.hint { flex: none; height: 33px; background: #ffffcc; border: 1px solid #000; padding-left: 489px; font: bold 13px/28px var(--serif); }
.cmdline { flex: none; height: 27px; background: #b4fffa; border-top: 7px solid; border-color: #5a8f8f; }

.hist { position: absolute; left: 1177px; top: 174px; width: 464px; height: 260px; display: flex; flex-direction: column; border: 1px solid #222; }
.hist-body { flex: 1; display: flex; gap: 2px; background: var(--te); border-top: 1px solid #000; padding: 4px 4px 0; font-weight: bold; }
.hist-left { width: 103px; display: flex; flex-direction: column; }
.radios { background: var(--cy); border: 2px solid #000; height: 137px; }
.radios label { display: flex; align-items: center; gap: 7px; height: 27px; font-size: 15px; padding-left: 6px; }
.radios input { appearance: none; margin: 0; width: 10px; height: 10px; transform: rotate(45deg); border: 2px solid; border-color: var(--cyl) var(--cyd) var(--cyd) var(--cyl); }
.radios input:checked { background: #c8004c; border-color: var(--cyd) var(--cyl) var(--cyl) var(--cyd); }
.hist-list { flex: 1; display: flex; gap: 4px; background: var(--cy); border-left: 1px solid #000; }
.hist-list .box { flex: 1; border: 2px solid; border-color: var(--cyd) var(--cyl) var(--cyl) var(--cyd); padding: 3px 3px 3px 2px; }
.hist-list .box span { display: block; background: #000; color: var(--cy); font-size: 15px; line-height: 16px; }
.chart { flex: 1; background: var(--cy); border: 2px solid; border-color: #222 var(--cyl) var(--cyl) #222; display: flex; flex-direction: column; position: relative; }
.chart h3 { position: absolute; left: 43px; top: 2px; border: 1px solid #000; background: #b4fffa; box-shadow: 3px 3px #789; font: italic bold 15px/20px var(--mono); padding: 1px 3px 0; white-space: nowrap; }
.bars { height: 163px; flex: none; display: grid; grid-template-columns: repeat(6, 55px); padding-left: 4px; }
.bars > div { display: flex; flex-direction: column; justify-content: flex-end; align-items: center; font-size: 15px; line-height: 15px; position: relative; }
.bars i { align-self: stretch; border: 1px solid #000; margin-right: -1px; }
.bars .low span { color: #d01818; }
.red i, span.red { background: #ff1a1a; } .yel i, span.yel { background: #ffff1a; } .grn i, span.grn { background: #1aec1a; }
.ticks { border-top: 4px solid #000; display: grid; grid-template-columns: repeat(6, 55px); padding-left: 4px; padding-top: 1px; }
.ticks span { border: 1px solid #000; margin-right: -1px; height: 29px; font-size: 15px; line-height: 15px; padding: 2px 0 0 17px; white-space: nowrap; }

.viewer { position: absolute; left: 16px; top: 708px; bottom: -6px; width: 497px; background: #000; display: flex; flex-direction: column; font-weight: bold; font-size: 15px; border: 1px solid #222; }
.viewer .titlebar { font-weight: normal; }
.vtitle { flex: none; height: 27px; margin-top: 1px; background: var(--te); border: 3px solid; border-color: var(--cyl) var(--ted) var(--ted) var(--tel); text-align: center; font: bold 14px/20px var(--serif); }
.vcols { flex: 1; display: grid; grid-template-columns: 171px 1fr; gap: 2px; margin: 2px 0; min-height: 0; }
.vleft, .vright { background: var(--te); display: flex; flex-direction: column; min-width: 0; }
.it { font-style: italic; font-weight: normal; } .it.b { font-weight: bold; }
.lhead { height: 29px; display: flex; flex: none; border-bottom: 1px solid #000; }
.lhead strong { flex: 1; background: var(--cy); border: solid #000; border-width: 0 1px; text-align: center; font-style: italic; line-height: 28px; }
.lhead .bev { margin: 2px; width: 46px; }
.lhead .bev:last-child { width: 38px; }
.lists { flex: 1; display: grid; grid-template-columns: 1fr 14px; grid-template-rows: 1fr 14px; gap: 4px; padding: 1px; min-height: 0; }
.list { border: 2px solid; border-color: var(--ted) var(--tel) var(--tel) var(--ted); padding: 2px 2px 2px 1px; white-space: nowrap; }
.list li { line-height: 18px; }
.list .sel { background: #000; color: var(--te); line-height: 16px; margin-bottom: 2px; }
.replace { height: 33px; border: 1px solid #000; padding: 2px 3px 2px 6px; flex: none; }
.replace .bev { width: 100%; height: 100%; }
.opt { display: flex; align-items: center; justify-content: space-between; padding: 0 4px 0 3px; }
.opt i { width: 12px; height: 7px; border: 2px solid; border-color: var(--cyl) var(--cyd) var(--cyd) var(--cyl); }
.rhead { height: 30px; display: flex; flex: none; background: var(--cy); }
.rhead .b { width: 208px; }
.meas { flex: 1; line-height: 30px; }
.rhead .opt { width: 60px; }
.vright .lists { flex: none; height: 136px; }
.navrow { display: flex; gap: 4px; height: 26px; padding: 1px 2px 2px; line-height: 17px; }
.navrow .bev { width: 44px; } .navrow .bev:first-child { width: 53px; }
.navrow label { flex: 1; line-height: 23px; }
.idx { position: relative; width: 60px; display: flex; }
.idx svg { position: absolute; left: 3px; top: 1px; }
.idx input { width: 100%; min-width: 0; font: bold 15px/17px var(--mono); background: var(--te); border: 2px solid; border-color: var(--ted) var(--tel) var(--tel) var(--ted); padding: 0 0 3px 6px; border-radius: 0; }
.zoomrow { display: flex; height: 34px; flex: none; }
.az { width: 124px; border: 1px solid #000; padding: 2px 2px 2px 4px; }
.az .bev, .svbox .bev { width: 100%; height: 100%; }
.sv { width: 28px; background: var(--cy); border: solid #000; border-width: 1px 0; line-height: 32px; }
.svbox { width: 69px; background: #1aec1a; border: 1px solid #000; border-left: 0; padding: 2px 2px 2px 5px; }
.svbox .bev { background: #1aec1a; justify-content: flex-end; border-color: #a0f8a0 #3a8f3a #3a8f3a #a0f8a0; }
.showall { display: flex; gap: 3px; padding: 6px 0 0 4px; line-height: 16px; white-space: nowrap; }
.showall input { appearance: none; margin: 0; width: 13px; height: 13px; border: 2px solid; border-color: var(--tel) var(--ted) var(--ted) var(--tel); }
.delrow { flex: 1; display: flex; justify-content: flex-end; gap: 4px; padding: 2px 3px; }
.delrow .bev { width: 30px; height: 30px; }
.vinfo { flex: none; height: 21px; background: var(--te); text-align: center; font: bold 15px/20px var(--mono); }
.erf { flex: none; height: 19px; margin: 1px 0; background: #ffffcc; line-height: 20px; padding-left: 2px; }
.vfoot { flex: none; height: 34px; background: var(--cy); display: flex; gap: 4px; padding: 2px 2px 0 0; }
.vfoot .bev { width: 30px; height: 32px; padding-bottom: 2px; }
.vfoot .close { flex: 1; }
.vfoot .hot { border-color: #e01010; }

.ppt { position: absolute; left: 1107px; right: 0; top: 411px; bottom: 0; background: #bfdbff; display: flex; flex-direction: column; overflow: hidden; font: 15px/20px var(--ui); color: #15428b; border-left: 1px solid #e8f0fa; white-space: nowrap; }
.phead { flex: none; display: grid; grid-template-columns: 57px 557px 74px 1fr; grid-template-rows: 34px 30px; background: linear-gradient(#fff 34px, #bfdbff 34px); }
.orb { grid-row: 1 / 3; padding: 8px 0 0 4px; align-self: start; }
.qat { display: flex; align-items: center; gap: 9px; }
.qatbar { display: flex; align-items: center; gap: 13px; height: 25px; margin-top: 3px; border: 1px solid #b9b9c6; border-left: 0; border-radius: 12px; padding: 0 14px 0 10px; background: #f8faff; }
.qatbar button { display: flex; align-items: center; gap: 9px; }
.ctxtitle { grid-column: 3; color: #000; text-align: center; line-height: 26px; padding-top: 4px; border-bottom: 3px solid #f5c34a; background: linear-gradient(#fff, #fdf0bd); height: 32px; }
.doctitle { grid-column: 4; color: #000; line-height: 34px; padding-left: 11px; }
.ptabs { grid-column: 2; display: flex; }
.ptabs button { padding: 0 15px; height: 30px; }
.ptabs .act { background: linear-gradient(#fff, #dfeafa); border: 1px solid #8db2e3; border-bottom: 0; border-radius: 4px 4px 0 0; padding: 0 11px; margin: 1px 3px 0; height: 29px; }
.ctxtab { grid-column: 3; border: solid #a5c3ea; border-width: 0 1px; height: 30px; }

.ribbon { flex: none; height: 119px; display: flex; gap: 3px; padding: 2px 4px; background: #d6e5f5; border: solid #8db2e3; border-width: 1px 0; }
.grp { flex: none; border: 1px solid #9dbfe4; border-radius: 4px; display: flex; flex-direction: column; background: linear-gradient(#dce7f5 15%, #c9d9ed 16%, #dcebfa); overflow: hidden; }
.clip { width: 84px; } .slides { width: 141px; } .font { width: 264px; } .para { width: 343px; } .draw { width: 150px; }
.gbody { flex: 1; display: flex; min-height: 0; }
.gbody.v { flex-direction: column; }
.gtitle { height: 22px; background: #c1d8f0; color: #3e6aaa; text-align: center; line-height: 21px; display: flex; align-items: center; justify-content: center; padding: 0 5px; }
.gtitle span { flex: 1; }
.gtitle span:not(:last-child) { padding-right: 12px; }
.launch { width: 10px; height: 10px; }
.dd { width: 6px; height: 4px; flex: none; }
.big { display: flex; flex-direction: column; align-items: center; width: 54px; padding-top: 8px; gap: 8px; position: relative; }
.slides .big { width: 64px; }
.big .side-dd { position: absolute; right: 0; top: 75px; }
.col3 { display: flex; flex-direction: column; gap: 10px; padding: 7px 0 0 4px; }
.rows { display: flex; flex-direction: column; gap: 6px; padding: 4px 0 0 4px; }
.rows button { display: flex; align-items: center; gap: 6px; height: 20px; }
.frow { display: flex; gap: 4px; padding: 12px 0 0 3px; }
.frow.f2 { padding-top: 14px; }
.combo { height: 28px; background: #eaf2fb; border: 1px solid #abc4e6; display: flex; align-items: center; justify-content: space-between; padding: 0 5px 0 3px; color: #111; }
.c1 { width: 118px; } .c2 { width: 52px; margin-left: -5px; }
.bg { display: flex; height: 26px; border: 1px solid #8fb0dc; border-radius: 3px; background: linear-gradient(#dce8f8 45%, #c3d6f0 46%, #d4e4f8); overflow: hidden; }
.bg button { width: 26px; display: flex; align-items: center; justify-content: center; border-right: 1px solid #b4cbea; }
.bg button:last-child { border-right: 0; }
.bg .n { width: 13px; } .bg .w { width: 36px; gap: 6px; }
.bg .hot { background: linear-gradient(#fdd29a, #fdb24c 50%, #ffe58a); }
.ser { font: bold 14px/20px var(--serif); color: #222; }
.bg .ser { font-size: 14px; gap: 4px; }
.bg.grow1 .ser { gap: 0; font-size: 16px; } .bg.grow1 .sm { font-size: 13px; }
.grow1 svg { align-self: flex-start; margin-top: 5px; }
.fmt { width: 213px; }
.fmt button { flex: 1 1 auto; width: auto; }
.i { font-style: italic; } .sh { text-shadow: 2px 2px #999; }
.bg .av { font-size: 11px; line-height: 11px; }
.bg .color { width: 36px; color: #2f5596; }
.color span { border-bottom: 4px solid #e01010; padding: 0 5px; line-height: 16px; }
.pcol { display: flex; flex-direction: column; width: 180px; flex: none; }
.pcol .frow { padding: 13px 0 0 3px; }
.pcol .f2 { padding-top: 13px; }
.para .rows { padding-left: 6px; }
.shapes { margin: 4px; }

.pmain { flex: 1; display: flex; min-height: 0; background: linear-gradient(#a3c0e8, #7e9fd0 50%, #6488c0); }
.pane { width: 200px; flex: none; display: flex; flex-direction: column; border-right: 1px solid #5d86bf; }
.pantabs { height: 28px; flex: none; display: flex; align-items: end; background: #c3daf8; border-bottom: 1px solid #5d86bf; color: #1c3c7c; padding-top: 3px; }
.pantabs button { height: 24px; }
.pantabs .act { padding: 0 8px; font-weight: bold; color: #001a6e; background: linear-gradient(#fff, #c0d6f5); border-top: 1px solid #6f93c8; clip-path: polygon(0 0, 86% 0, 100% 100%, 0 100%); }
.pantabs .tab2 { display: grid; margin-left: -2px; }
.tab2 > * { grid-area: 1 / 1; }
.tab2 span { padding: 2px 0 0 9px; text-align: left; }
.pantabs .px { margin-left: auto; padding: 0 6px; }
.panbody { flex: 1; display: flex; min-height: 0; background: linear-gradient(#9dbce8, #84a5d6 40%, #7094cb); }
.thumbs { flex: 1; padding: 4px 0 0 3px; overflow: hidden; }
.thumbs li { width: 178px; height: 92px; margin-bottom: 3px; display: flex; padding: 4px 3px; border: 1px solid transparent; }
.thumbs .cur { background: linear-gradient(#fbd59b 25%, #f2a541 26%, #f0a03c); border: 2px solid #d87a28; padding: 3px 2px; }
.thumbs span { width: 26px; flex: none; margin-left: -3px; color: #fff; font: bold 11px/20px "DejaVu Serif", serif; text-shadow: 1px 1px 1px #345; }
.thumbs svg { width: 146px; height: 84px; border: 1px solid #555; flex: none; box-shadow: 2px 2px 2px #3458; background: #fff; }
.tx path, .tr path, .tb path { stroke-width: 1; stroke-dasharray: 2 .5 4 .5 1 1; opacity: .75; fill: none; }
.tx path { stroke: #333; } .tr path { stroke: #e02020; } .tb path { stroke: #2030d0; }
.pscroll { width: 16px; flex: none; background: linear-gradient(90deg, #6b8cbc, #89a9d6); display: flex; flex-direction: column; align-items: center; padding: 6px 0 68px; justify-content: space-between; }
.pscroll i { width: 14px; height: 20px; border: 1px solid #44648f; border-radius: 2px; background: repeating-linear-gradient(#dde8f5 0 3px, #5c6f8c 3px 4px) content-box, #dde8f5; padding: 4px 3px; }
.stage { flex: 1; min-width: 0; border-left: 5px solid #cfe0f7; padding: 97px 0 0 18px; background: radial-gradient(ellipse 700px 120px at 640px 100px, #9dbbe6 98%, transparent), linear-gradient(#b4ccee, #7c9dcf 60%, #6488c0); box-shadow: -1px 0 #5d86bf; }
.slide { height: 100%; background: #fff; position: relative; overflow: hidden; color: #000; font-family: Lato, "Noto Sans CJK SC", sans-serif; padding-left: 34px; }
.slide h2 { background: #339966; color: #fff; margin-left: -34px; padding-left: 28px; height: 58px; font-size: 27px; line-height: 58px; }
.slide u { text-decoration: underline wavy #e02020 1px; text-underline-offset: 2px; }
.tbox { margin-top: 52px; height: 400px; border: dashed #5a7896; border-width: 1px 0 0 1px; padding: 6px 0 0 11px; position: relative; }
.h { position: absolute; width: 11px; height: 36px; overflow: visible; }
.h1 { left: -6px; top: -6px; } .h2 { left: 509px; top: -31px; } .h3 { left: -6px; top: 203px; }
.tbox p { font-size: 17px; line-height: 20px; }
.tbox .n { display: flex; }
.tbox b { font-weight: normal; width: 27px; flex: none; }
.tbox .l18 { font-size: 18px; }
.l18 span { color: #2c2c2c; }
.tbox em, .tbox .warn { font-style: normal; color: #d01818; }
.tbox .m24 { margin-top: 24px; }
.tbox .m40 { margin-top: 39px; }
.tbox .sub { font-size: 15px; line-height: 19px; padding-left: 26px; }
.ghost b { color: #aaa; }
.caret { width: 1px; height: 20px; background: #000; }
.attach { position: absolute; left: 75px; top: 323px; width: 116px; overflow: hidden; }
.attach svg { margin: 0 auto; }
.attach figcaption { font-size: 14px; line-height: 19px; margin-top: 5px; display: flex; flex-direction: column; align-items: center; }
.arrow { position: absolute; left: 318px; top: 329px; }
```
